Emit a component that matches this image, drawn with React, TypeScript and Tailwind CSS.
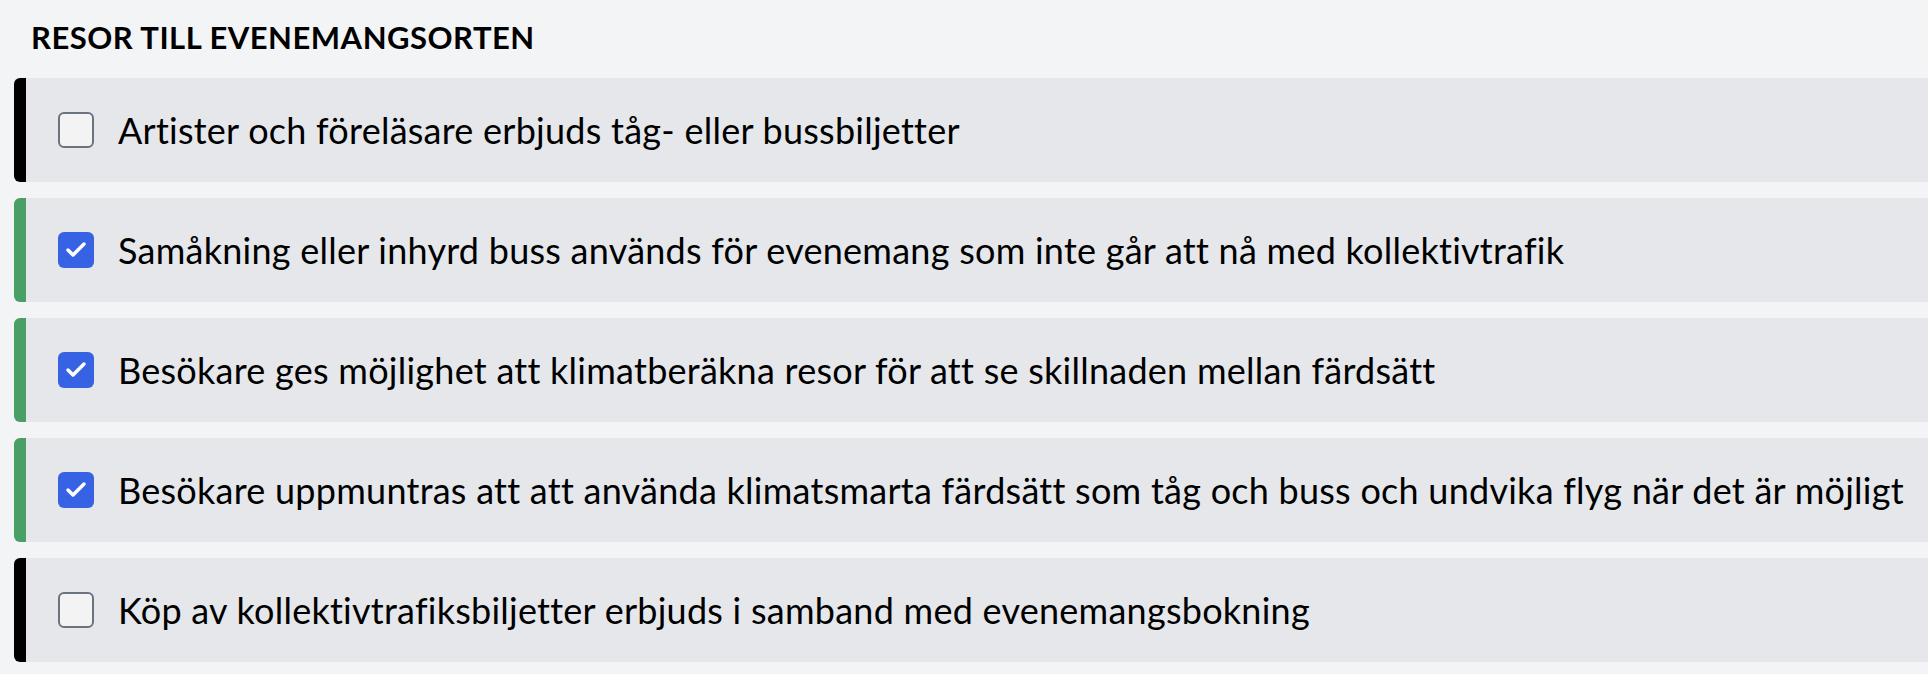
import { Check } from "lucide-react"

type Item = { label: string; done: boolean }

const items: Item[] = [
  { label: "Artister och föreläsare erbjuds tåg- eller bussbiljetter", done: false },
  { label: "Samåkning eller inhyrd buss används för evenemang som inte går att nå med kollektivtrafik", done: true },
  { label: "Besökare ges möjlighet att klimatberäkna resor för att se skillnaden mellan färdsätt", done: true },
  {
    label: "Besökare uppmuntras att att använda klimatsmarta färdsätt som tåg och buss och undvika flyg när det är möjligt",
    done: true,
  },
  { label: "Köp av kollektivtrafiksbiljetter erbjuds i samband med evenemangsbokning", done: false },
]

function Row({ item }: { item: Item }) {
  return (
    <label
      className={`flex h-[104px] items-center gap-6 rounded-l-[6px] border-l-[12px] bg-[#e5e7eb] pl-8 ${
        item.done ? "border-[#4a9f66]" : "border-black"
      }`}
    >
      {item.done ? (
        <span className="flex h-9 w-9 shrink-0 items-center justify-center rounded-[6px] bg-[#3662e3]">
          <Check className="h-6 w-6 text-white" strokeWidth={3.5} />
        </span>
      ) : (
        <span className="h-9 w-9 shrink-0 rounded-[6px] border-2 border-[#6b7280] bg-[#f3f3f3]" />
      )}
      <span className="whitespace-nowrap text-[36px] leading-none tracking-[0.25px] text-black">{item.label}</span>
    </label>
  )
}

export default function App() {
  return (
    <div className="min-h-screen bg-[#f3f4f6] pb-3 pl-[14px] pt-[19px] font-['Lato',sans-serif]">
      <h2 className="pl-[17px] text-[31px] font-bold leading-[36px] tracking-[0.5px] text-black">
        RESOR TILL EVENEMANGSORTEN
      </h2>
      <div className="mt-[23px] flex flex-col gap-4">
        {items.map((item) => (
          <Row key={item.label} item={item} />
        ))}
      </div>
    </div>
  )
}
